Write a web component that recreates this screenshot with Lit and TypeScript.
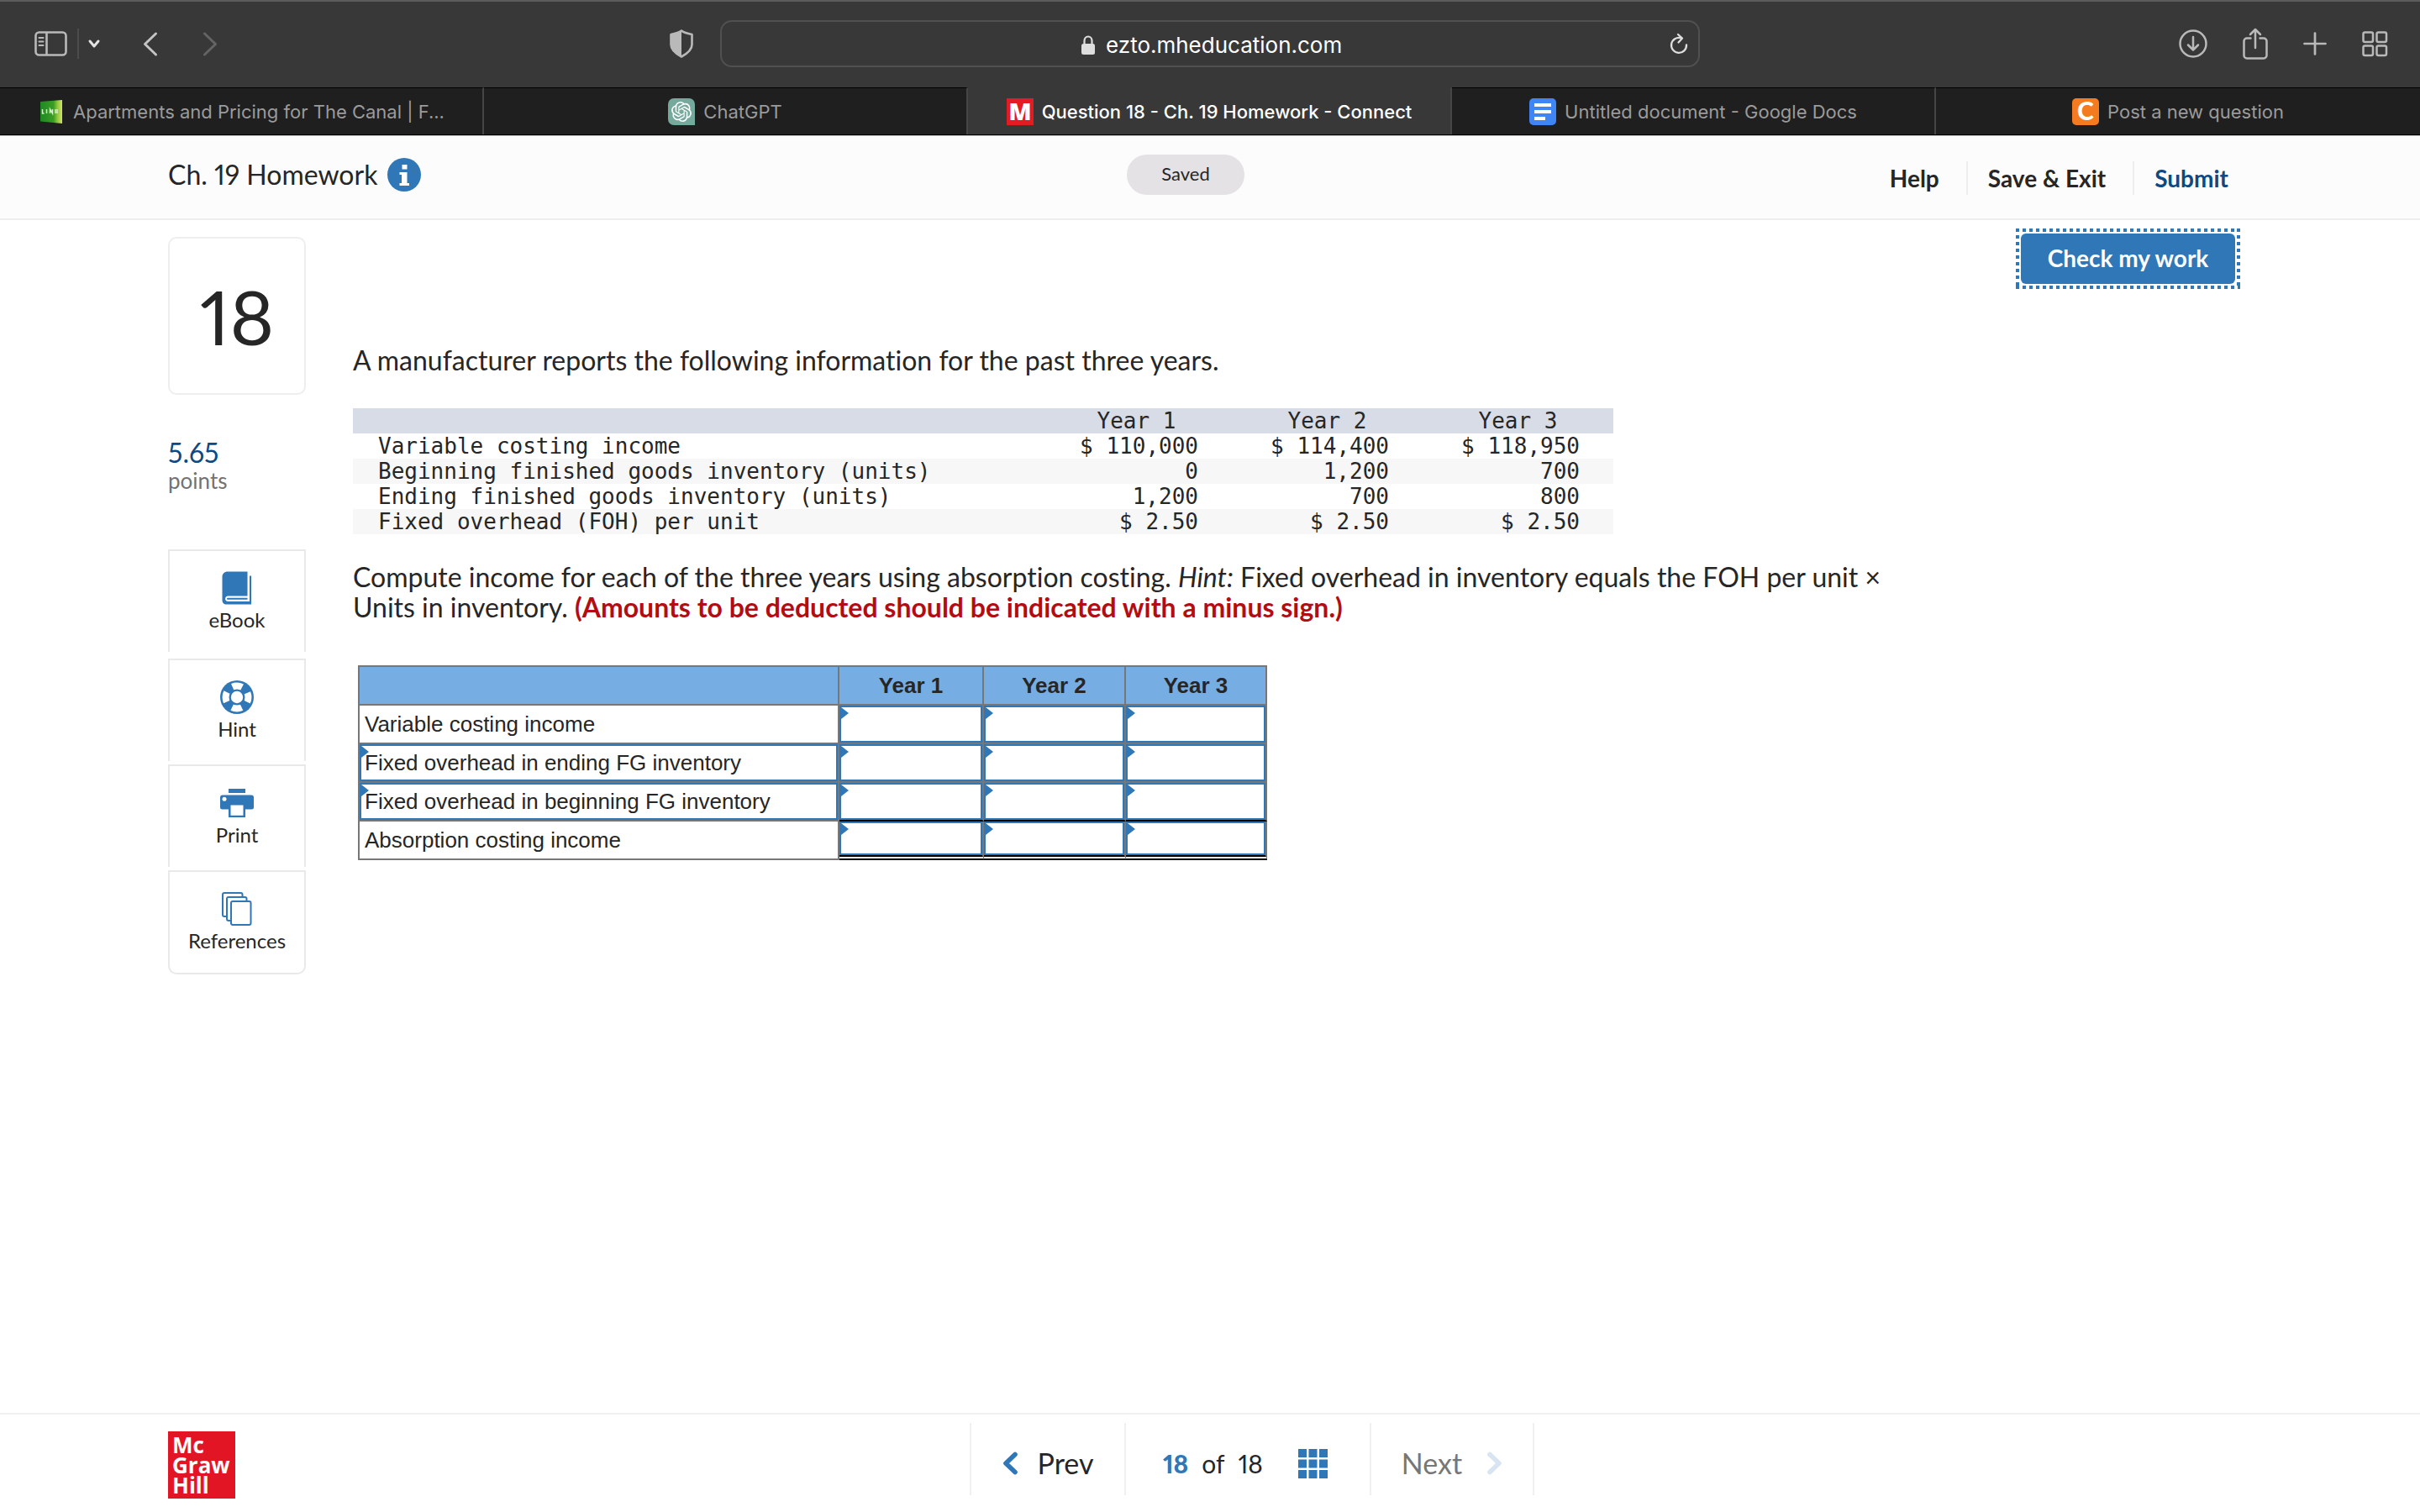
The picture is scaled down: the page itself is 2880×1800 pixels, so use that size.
import { LitElement, html, svg, css } from "lit";
import { customElement, property } from "lit/decorators.js";

const icons: Record<string, unknown> = {
  sidebar: svg`<g fill="none" stroke="#b9b9b9" stroke-width="2.6"><rect x="1.5" y="1.5" width="36" height="27" rx="4"/><path d="M14.5 2v26"/></g><path d="M5.500 8h5M5.500 12.500h5M5.500 17h5" stroke="#b9b9b9" stroke-width="2" stroke-linecap="round"/>`,
  chevronDown: svg`<path d="M2 2l5 6 5-6" fill="none" stroke="#e4e4e4" stroke-width="3" stroke-linecap="round" stroke-linejoin="round"/>`,
  back: svg`<path d="M15.500 2L2.500 14.500l13 12.500" fill="none" stroke="#c4c4c4" stroke-width="3" stroke-linecap="round" stroke-linejoin="round"/>`,
  forward: svg`<path d="M2.500 2l13 12.500L2.500 27" fill="none" stroke="#646464" stroke-width="3" stroke-linecap="round" stroke-linejoin="round"/>`,
  shield: svg`<path d="M14 1.500C17 4 21 5 26.500 6v12c0 6-5 10.500-12.500 14.500C6.500 28.500 1.500 24 1.500 18V6C7 5 11 4 14 1.500z" fill="none" stroke="#b9b9b9" stroke-width="2.600" stroke-linejoin="round"/><path d="M14 1.500v31C6.500 28.500 1.500 24 1.500 18V6C7 5 11 4 14 1.500z" fill="#b9b9b9"/>`,
  lock: svg`<rect x="1" y="10" width="16" height="13" rx="2.500" fill="#dedede"/><path d="M4.500 11V6.500a4.500 5 0 0 1 9 0V11" fill="none" stroke="#dedede" stroke-width="2.200"/>`,
  reload: svg`<path d="M13.500 5.200A9 9 0 1 0 20 13.500" fill="none" stroke="#dedede" stroke-width="2.300" stroke-linecap="round"/><path d="M10 1l5 4.500-4.500 5" fill="none" stroke="#dedede" stroke-width="2.300" stroke-linecap="round" stroke-linejoin="round"/>`,
  download: svg`<g fill="none" stroke="#b9b9b9" stroke-width="2.500" stroke-linecap="round" stroke-linejoin="round"><circle cx="17" cy="17" r="15.500"/><path d="M17 9v15M11 18.500l6 6 6-6"/></g>`,
  share: svg`<g fill="none" stroke="#b9b9b9" stroke-width="2.500" stroke-linecap="round" stroke-linejoin="round"><path d="M9.500 12.500H5A3.500 3.500 0 0 0 1.500 16v17A3.500 3.500 0 0 0 5 36.500h20a3.500 3.500 0 0 0 3.500-3.500V16a3.500 3.500 0 0 0-3.500-3.500h-4.500"/><path d="M15 24V2M9 8l6-6 6 6"/></g>`,
  plus: svg`<path d="M14 1.500v25M1.500 14h25" stroke="#b9b9b9" stroke-width="2.700" stroke-linecap="round"/>`,
  overview: svg`<g fill="none" stroke="#b9b9b9" stroke-width="2.500"><rect x="1.500" y="1.500" width="11.500" height="11.500" rx="2"/><rect x="17.500" y="1.500" width="11.500" height="11.500" rx="2"/><rect x="1.500" y="17.500" width="11.500" height="11.500" rx="2"/><rect x="17.500" y="17.500" width="11.500" height="11.500" rx="2"/></g>`,
  info: svg`<circle cx="20" cy="20" r="20" fill="#3077b7"/><path d="M17.500 8h6v5.500h-6zM14.500 17h9v13h2.500v3H14.500v-3H17V20h-2.500z" fill="#fff"/>`,
  ebook: svg`<g transform="translate(1 0)"><path d="M8 0.500h23.500v29H8.500c-4.500 0-4.500 6.500 0 6.500h25.500V5.500h2v34H6.500C3.500 39.500 1.500 37.500 1.500 34.500V7C1.500 3 4 .5 8 .5z" fill="#3077b7"/><path d="M8 31.800h23.500v2H8a1 1 0 0 1 0-2z" fill="#3077b7"/></g>`,
  hint: svg`<circle cx="20" cy="20" r="20" fill="#3077b7"/><circle cx="20" cy="20" r="13.200" fill="none" stroke="#fff" stroke-width="8.500" stroke-dasharray="11.600 9.134" stroke-dashoffset="5.800"/><circle cx="20" cy="20" r="9.500" fill="#3077b7"/><circle cx="20" cy="20" r="7.200" fill="#fff"/>`,
  print: svg`<path d="M10 3h20v5H10zM3 10.500h34a3 3 0 0 1 3 3V25a2.500 2.500 0 0 1-2.500 2.500H30V37H10v-9.500H2.500A2.500 2.500 0 0 1 0 25V13.500a3 3 0 0 1 3-3z" fill="#3077b7"/><path d="M12.500 22.500h15v12.300h-15z" fill="#fff"/><circle cx="5" cy="15.300" r="2.500" fill="#fff"/>`,
  references: svg`<g fill="#fff" stroke="#3077b7" stroke-width="2"><rect x="3" y="1" width="23.500" height="28" rx="2"/><rect x="8" y="6" width="23.500" height="28" rx="2"/><rect x="13" y="11" width="23.500" height="28" rx="2"/></g>`,
  prev: svg`<path d="M15 3.500L4 14l11 10.500" fill="none" stroke="#3077b7" stroke-width="5.600" stroke-linecap="round" stroke-linejoin="round"/>`,
  next: svg`<path d="M3 3.500L14 14 3 24.500" fill="none" stroke="#d8e4f1" stroke-width="5.600" stroke-linecap="round" stroke-linejoin="round"/>`,
  grid: svg`<path d="M0 0h10v10H0zM12.500 0h10v10h-10zM25 0h10v10H25zM0 12.500h10v10H0zM12.500 12.500h10v10h-10zM25 12.500h10v10H25zM0 25h10v10H0zM12.500 25h10v10h-10zM25 25h10v10H25z" fill="#3077b7"/>`,
  canal: svg`<defs><linearGradient id="leaf"><stop offset="0" stop-color="#1d8a22"/><stop offset=".6" stop-color="#3a9c25"/><stop offset=".78" stop-color="#8fc63a"/><stop offset="1" stop-color="#d5e06a"/></linearGradient></defs><path d="M3 4l26-2v28L3 27.500z" fill="url(#leaf)"/><path d="M5.500 13v5h2M10.500 13v5M14.500 18v-5l3 5v-5M21 13v5M23 13v5" fill="none" stroke="#d9efc9" stroke-width="1.500"/>`,
  chatgpt: svg`<path d="M7 0h18a7 7 0 0 1 7 7v25H7a7 7 0 0 1-7-7V7a7 7 0 0 1 7-7z" fill="#75a99c"/><g transform="translate(4 4)"><path fill="#fff" d="M22.2819 9.8211a5.9847 5.9847 0 0 0-.5157-4.9108 6.0462 6.0462 0 0 0-6.5098-2.9A6.0651 6.0651 0 0 0 4.9807 4.1818a5.9847 5.9847 0 0 0-3.9977 2.9 6.0462 6.0462 0 0 0 .7427 7.0966 5.98 5.98 0 0 0 .511 4.9107 6.051 6.051 0 0 0 6.5146 2.9001A5.9847 5.9847 0 0 0 13.2599 24a6.0557 6.0557 0 0 0 5.7718-4.2058 5.9894 5.9894 0 0 0 3.9977-2.9001 6.0557 6.0557 0 0 0-.7475-7.0729zm-9.022 12.6081a4.4755 4.4755 0 0 1-2.8764-1.0408l.1419-.0804 4.7783-2.7582a.7948.7948 0 0 0 .3927-.6813v-6.7369l2.02 1.1686a.071.071 0 0 1 .038.0615v5.5826a4.504 4.504 0 0 1-4.4945 4.4944zm-9.6607-4.1254a4.4708 4.4708 0 0 1-.5346-3.0137l.142.0852 4.783 2.7582a.7712.7712 0 0 0 .7806 0l5.8428-3.3685v2.3324a.0804.0804 0 0 1-.0332.0615L9.74 19.9502a4.4992 4.4992 0 0 1-6.1408-1.6464zM2.3408 7.8956a4.485 4.485 0 0 1 2.3655-1.9728V11.6a.7664.7664 0 0 0 .3879.6765l5.8144 3.3543-2.0201 1.1685a.0757.0757 0 0 1-.071 0l-4.8303-2.7865A4.504 4.504 0 0 1 2.3408 7.872zm16.5963 3.8558L13.1038 8.364 15.1192 7.2a.0757.0757 0 0 1 .071 0l4.8303 2.7913a4.4944 4.4944 0 0 1-.6765 8.1042v-5.6772a.79.79 0 0 0-.407-.667zm2.0107-3.0231l-.142-.0852-4.7735-2.7818a.7759.7759 0 0 0-.7854 0L9.409 9.2297V6.8974a.0662.0662 0 0 1 .0284-.0615l4.8303-2.7866a4.4992 4.4992 0 0 1 6.6802 4.66zM8.3065 12.863l-2.02-1.1638a.0804.0804 0 0 1-.038-.0567V6.0742a4.4992 4.4992 0 0 1 7.3757-3.4537l-.142.0805L8.704 5.459a.7948.7948 0 0 0-.3927.6813zm1.0976-2.3654l2.602-1.4998 2.6069 1.4998v2.9994l-2.5974 1.4997-2.6067-1.4997Z"/></g>`,
  connect: svg`<rect width="32" height="32" fill="#e31b23"/><text x="16" y="26" text-anchor="middle" font-family="Open Sans, sans-serif" font-weight="800" font-size="28" fill="#fff">M</text>`,
  docs: svg`<rect width="32" height="32" rx="5" fill="#3f85f4"/><path d="M6 6h20v4H6zM6 14h20v4H6zM6 22h13v4H6z" fill="#fff"/>`,
  chegg: svg`<rect width="32" height="32" rx="5" fill="#f47b1f"/><text x="16" y="26" text-anchor="middle" font-family="Lato, sans-serif" font-weight="900" font-size="30" fill="#fff">C</text>`,
};

const icon = (name: string, w: number, h: number) =>
  html`<svg width=${w} height=${h} viewBox="0 0 ${w} ${h}" aria-hidden="true">${icons[name]}</svg>`;

const reset = css`
  *, *::before, *::after { box-sizing: border-box; }
  svg { display: block; flex: none; overflow: visible; }
  a { color: inherit; text-decoration: none; }
  button { border: 0; padding: 0; background: none; font: inherit; color: inherit; cursor: pointer; }
  input { font: inherit; color: inherit; }
`;

@customElement("browser-chrome")
export class BrowserChrome extends LitElement {
  static styles = [reset, css`
    :host { display: block; font-family: Inter, sans-serif; }
    .bar { display: grid; grid-template-columns: 1fr auto 1fr; align-items: center; height: 104px; padding: 0 38px 2px; background: #383838; border-top: 2px solid #5c5c5c; }
    .left, .right { display: flex; align-items: center; }
    .left { padding-left: 3px; }
    .rule { width: 2px; height: 36px; margin: 0 11px 0 12px; background: #4c4c4c; }
    .back { margin-left: 51px; }
    .fwd { margin-left: 53px; }
    .shield { margin-left: auto; margin-right: 32px; }
    .address { display: flex; align-items: center; justify-content: center; gap: 12px; width: 1166px; height: 56px; padding-left: 54px; border: 2px solid #505050; border-radius: 14px; color: #fff; }
    .url { width: 286px; border: 0; padding: 0; outline: 0; background: none; font-size: 26px; line-height: 32px; }
    .group { display: flex; align-items: center; justify-content: center; gap: 12px; flex: 1; padding-top: 3px; }
    .reload { margin-right: 12px; }
    .right { justify-content: flex-end; gap: 42px; }
    .tabs { display: grid; grid-template-columns: repeat(5, 1fr); height: 57px; background: #1f1f1f; border-bottom: 1px solid #000; }
    .tab { display: flex; align-items: center; justify-content: center; gap: 10px; border-top: 1px solid #000; border-right: 2px solid #464646; color: #9b9b9b; font-size: 22px; line-height: 28px; white-space: nowrap; }
    .tab:last-child { border-right: 0; }
    .active { background: #383838; border-top-color: #383838; color: #fff; font-weight: 500; }
  `];

  private tabs = [
    { icon: "canal", text: "Apartments and Pricing for The Canal | F..." },
    { icon: "chatgpt", text: "ChatGPT" },
    { icon: "connect", text: "Question 18 - Ch. 19 Homework - Connect", active: true },
    { icon: "docs", text: "Untitled document - Google Docs" },
    { icon: "chegg", text: "Post a new question" },
  ];

  render() {
    return html`
      <div class="bar">
        <div class="left">
          <button aria-label="Sidebar">${icon("sidebar", 39, 30)}</button>
          <span class="rule"></span>
          <button aria-label="Tab groups">${icon("chevronDown", 14, 10)}</button>
          <button class="back" aria-label="Back">${icon("back", 18, 29)}</button>
          <button class="fwd" aria-label="Forward">${icon("forward", 18, 29)}</button>
          <button class="shield" aria-label="Privacy report">${icon("shield", 28, 34)}</button>
        </div>
        <div class="address">
          <div class="group">
            ${icon("lock", 18, 24)}
            <input class="url" type="text" aria-label="Address" .value=${"ezto.mheducation.com"}>
          </div>
          <button class="reload" aria-label="Reload">${icon("reload", 22, 24)}</button>
        </div>
        <div class="right">
          <button aria-label="Downloads">${icon("download", 34, 34)}</button>
          <button aria-label="Share">${icon("share", 30, 38)}</button>
          <button aria-label="New tab">${icon("plus", 28, 28)}</button>
          <button aria-label="Tab overview">${icon("overview", 31, 31)}</button>
        </div>
      </div>
      <nav class="tabs">
        ${this.tabs.map((t) => html`<a href="#" class="tab ${t.active ? "active" : ""}">${icon(t.icon, 32, 32)}<span>${t.text}</span></a>`)}
      </nav>`;
  }
}

@customElement("tool-button")
export class ToolButton extends LitElement {
  @property() icon = "";
  @property() label = "";
  static styles = [reset, css`
    :host { display: block; }
    .tool { display: flex; flex-direction: column; align-items: center; gap: 4px; width: 100%; height: 122px; padding-top: 24px; border: 2px solid #e9e9e9; border-bottom: 0; font-size: 24px; line-height: 28px; }
    :host(:last-child) .tool { height: 124px; border-bottom: 2px solid #e9e9e9; border-radius: 0 0 10px 10px; }
  `];
  render() {
    return html`<button class="tool">${icon(this.icon, 40, 40)}<span>${this.label}</span></button>`;
  }
}

@customElement("answer-grid")
export class AnswerGrid extends LitElement {
  static styles = [reset, css`
    :host { display: block; font-family: "Liberation Sans", Arial, sans-serif; font-size: 26px; line-height: 30px; }
    table { border-collapse: separate; border-spacing: 0; border: solid #777; border-width: 2px 0 0 2px; table-layout: fixed; width: 1082px; }
    th, td { height: 46px; padding: 0; border: solid #777; border-width: 0 2px 2px 0; font-weight: 400; text-align: left; }
    thead th, thead td { background: #76ade3; font-weight: 700; text-align: center; }
    .name { width: 571px; }
    .y1 { width: 172px; }
    .y2 { width: 169px; }
    .label { padding-left: 6px; }
    .cell { position: relative; }
    .cell::before { content: ""; position: absolute; left: 2px; top: 2px; width: 9px; height: 14px; background: #3077b7; clip-path: polygon(0 0, 100% 50%, 0 100%); }
    input { display: block; width: 100%; height: 44px; padding: 0 4px; border: 2px solid #3077b7; border-radius: 0; outline: 0; background: #fff; }
    .total { border-bottom: 2px solid #000; }
    .double { border-bottom: 6px double #000; }
    .double input { height: 40px; }
  `];

  private rows = [
    { label: "Variable costing income", pick: false, line: "" },
    { label: "Fixed overhead in ending FG inventory", pick: true, line: "" },
    { label: "Fixed overhead in beginning FG inventory", pick: true, line: "total" },
    { label: "Absorption costing income", pick: false, line: "double" },
  ];

  render() {
    return html`<table>
      <thead><tr><td class="name"></td><th class="y1" scope="col">Year 1</th><th class="y2" scope="col">Year 2</th><th scope="col">Year 3</th></tr></thead>
      <tbody>
        ${this.rows.map((r) => html`<tr>
          ${r.pick
            ? html`<th class="cell" scope="row"><input type="text" aria-label="Row title" .value=${r.label}></th>`
            : html`<th class="label" scope="row">${r.label}</th>`}
          ${[1, 2, 3].map((y) => html`<td class="cell ${r.line}"><input type="text" aria-label="${r.label}, Year ${y}"></td>`)}
        </tr>`)}
      </tbody>
    </table>`;
  }
}

@customElement("app-root")
export class AppRoot extends LitElement {
  static styles = [reset, css`
    :host { display: block; font-family: Lato, sans-serif; font-variant-ligatures: no-common-ligatures; font-variant-numeric: proportional-nums; color: #262626; background: #fff; }
    .page { display: flex; flex-direction: column; min-height: 100vh; }
    .head { display: grid; grid-template-columns: 1fr auto 1fr; align-items: center; height: 101px; padding: 0 228px 6px 200px; background: #fcfcfc; border-top: 1px solid #bbb; border-bottom: 2px solid #eee; }
    .title { display: flex; align-items: center; gap: 12px; margin: 0; font-size: 32px; line-height: 40px; font-weight: 400; }
    .saved { display: flex; align-items: center; justify-content: center; width: 140px; height: 48px; margin-right: 30px; padding-bottom: 2px; border-radius: 24px; background: #e4e2e5; font-size: 22px; line-height: 28px; }
    .links { display: flex; justify-content: flex-end; padding-top: 8px; font-size: 28px; line-height: 40px; font-weight: 700; }
    .links a + a { margin-left: 32px; padding-left: 24px; border-left: 2px solid #eee; }
    .submit { color: #0d4a84; }
    .main { flex: 1; display: grid; grid-template-columns: 164px minmax(0, 1fr); column-gap: 56px; padding: 0 220px 40px 200px; }
    .side { padding-top: 20px; }
    .number { display: flex; align-items: center; justify-content: center; height: 188px; border: 2px solid #eee; border-radius: 10px; font-size: 90px; line-height: 100px; }
    .points { margin: 52px 0 66px; font-size: 26px; line-height: 32px; color: #737373; }
    .score { display: block; font-size: 32px; line-height: 34px; color: #0d4a84; }
    .tools { display: flex; flex-direction: column; gap: 4px; }
    .book { margin-bottom: 4px; }
    .content { padding-top: 16px; font-size: 32px; line-height: 36px; }
    .actions { display: flex; justify-content: flex-end; }
    .check { position: relative; width: 255px; height: 60px; padding-bottom: 2px; border-radius: 6px; background: #3077b7; color: #fff; font-size: 28px; line-height: 36px; font-weight: 700; }
    .check::after { content: ""; position: absolute; inset: -6px; pointer-events: none;
      background:
        repeating-linear-gradient(90deg, #3077b7 0 4px, transparent 4px 8px) top / 100% 4px no-repeat,
        repeating-linear-gradient(90deg, #3077b7 0 4px, transparent 4px 8px) bottom / 100% 4px no-repeat,
        repeating-linear-gradient(#3077b7 0 4px, transparent 4px 8px) left / 4px 100% no-repeat,
        repeating-linear-gradient(#3077b7 0 4px, transparent 4px 8px) right / 4px 100% no-repeat; }
    p { margin: 0; }
    .intro { margin-top: 73px; }
    .data { width: 1500px; margin: 39px 0 33px; border-spacing: 0; table-layout: fixed; font-family: "DejaVu Sans Mono", monospace; font-size: 26px; line-height: 30px; }
    .data th, .data td { padding: 0 40px 0 0; font-weight: 400; text-align: right; }
    .data thead { background: #d8dce6; }
    .data thead th { padding: 0; width: 227px; text-align: center; }
    .data thead .item { width: 819px; }
    .data tbody th { padding: 0 0 0 30px; text-align: left; }
    .data tbody tr:nth-child(even) { background: #f7f7f7; }
    .task { max-width: 1830px; }
    .warn { color: #b30c12; }
    .answers { padding: 51px 0 0 6px; }
    .foot { display: grid; grid-template-columns: 1fr auto 1fr; height: 118px; padding: 10px 100px 20px 200px; border-top: 2px solid #f0f0f0; }
    .logo { display: flex; flex-direction: column; justify-content: center; width: 80px; height: 80px; margin-top: 10px; padding-left: 5px; background: #e21525; color: #fff; font-family: "Open Sans", sans-serif; font-weight: 700; font-size: 26px; line-height: 24px; }
    .pager { display: flex; height: 86px; font-size: 34px; line-height: 40px; }
    .seg { display: flex; align-items: center; justify-content: center; padding-top: 10px; border-left: 2px solid #f0f0f0; }
    .prev { width: 184px; gap: 24px; }
    .count { justify-content: flex-start; width: 292px; gap: 16px; font-size: 30px; padding-left: 44px; }
    .current { color: #3077b7; font-weight: 900; }
    .jump { margin-left: 26px; }
    .next { width: 196px; gap: 30px; border-right: 2px solid #f0f0f0; color: #777; }
  `];

  private data = [
    ["Variable costing income", "$ 110,000", "$ 114,400", "$ 118,950"],
    ["Beginning finished goods inventory (units)", "0", "1,200", "700"],
    ["Ending finished goods inventory (units)", "1,200", "700", "800"],
    ["Fixed overhead (FOH) per unit", "$ 2.50", "$ 2.50", "$ 2.50"],
  ];

  render() {
    return html`<div class="page">
      <browser-chrome></browser-chrome>
      <header class="head">
        <h1 class="title">Ch. 19 Homework <button aria-label="Assignment information">${icon("info", 40, 40)}</button></h1>
        <span class="saved">Saved</span>
        <nav class="links"><a href="#">Help</a><a href="#">Save &amp; Exit</a><a href="#" class="submit">Submit</a></nav>
      </header>
      <main class="main">
        <aside class="side">
          <div class="number">18</div>
          <p class="points"><span class="score">5.65</span>points</p>
          <div class="tools">
            <tool-button class="book" icon="ebook" label="eBook"></tool-button>
            <tool-button icon="hint" label="Hint"></tool-button>
            <tool-button icon="print" label="Print"></tool-button>
            <tool-button icon="references" label="References"></tool-button>
          </div>
        </aside>
        <section class="content">
          <div class="actions"><button class="check">Check my work</button></div>
          <p class="intro">A manufacturer reports the following information for the past three years.</p>
          <table class="data">
            <thead><tr><td class="item"></td><th scope="col">Year 1</th><th scope="col">Year 2</th><th scope="col">Year 3</th></tr></thead>
            <tbody>
              ${this.data.map(([name, ...cells]) => html`<tr><th scope="row">${name}</th>${cells.map((c) => html`<td>${c}</td>`)}</tr>`)}
            </tbody>
          </table>
          <p class="task">Compute income for each of the three years using absorption costing. <em>Hint:</em> Fixed overhead in inventory equals the FOH per unit × Units in inventory. <strong class="warn">(Amounts to be deducted should be indicated with a minus sign.)</strong></p>
          <div class="answers"><answer-grid></answer-grid></div>
        </section>
      </main>
      <footer class="foot">
        <div class="logo"><span>Mc</span><span>Graw</span><span>Hill</span></div>
        <nav class="pager">
          <button class="seg prev">${icon("prev", 18, 28)}Prev</button>
          <div class="seg count"><strong class="current">18</strong><span>of</span><span>18</span><button class="jump" aria-label="Question list">${icon("grid", 35, 35)}</button></div>
          <button class="seg next" disabled>Next${icon("next", 18, 28)}</button>
        </nav>
      </footer>
    </div>`;
  }
}
